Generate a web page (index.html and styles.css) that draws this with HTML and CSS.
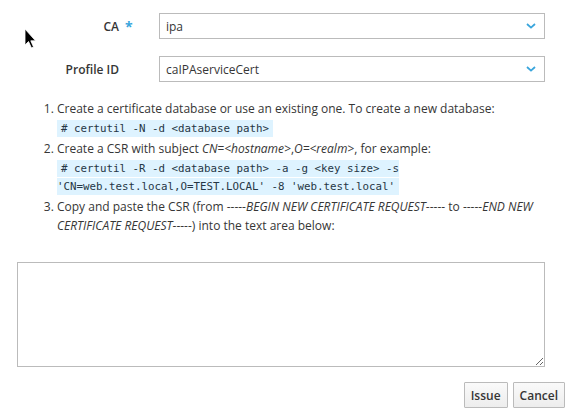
FILE: index.html
```html
<!DOCTYPE html>
<html>
<head>
<meta charset="utf-8">
<link rel="stylesheet" href="styles.css">
</head>
<body>
<div class="page">
  <div class="row">
    <div class="label required">CA</div>
    <div class="select"><span>ipa</span>
      <svg class="chev" width="10" height="6" viewBox="0 0 10 6"><path d="M1 1 L5 4.6 L9 1" fill="none" stroke="#39a5dc" stroke-width="1.8"/></svg>
    </div>
  </div>
  <div class="row">
    <div class="label">Profile ID</div>
    <div class="select"><span>caIPAserviceCert</span>
      <svg class="chev" width="10" height="6" viewBox="0 0 10 6"><path d="M1 1 L5 4.6 L9 1" fill="none" stroke="#39a5dc" stroke-width="1.8"/></svg>
    </div>
  </div>
  <ol class="steps">
    <li>Create a certificate database or use an existing one. To create a new database:
      <div class="cmd"><code># certutil -N -d &lt;database path&gt;</code></div>
    </li>
    <li>Create a CSR with subject <em>CN=&lt;hostname&gt;</em>,<em>O=&lt;realm&gt;</em>, for example:
      <div class="cmd"><code># certutil -R -d &lt;database path&gt; -a -g &lt;key size&gt; -s 'CN=web.test.local,O=TEST.LOCAL' -8 'web.test.local'</code></div>
    </li>
    <li>Copy and paste the CSR (from -----<em>BEGIN NEW CERTIFICATE REQUEST</em>----- to -----<em>END NEW CERTIFICATE REQUEST</em>-----) into the text area below:</li>
  </ol>
  <textarea class="csr"></textarea>
  <div class="buttons">
    <button class="btn">Issue</button>
    <button class="btn">Cancel</button>
  </div>
</div>
<svg class="cursor" width="16" height="24" viewBox="0 0 16 24"><path d="M1 1 L1 17 L4.5 13.5 L7.5 20 L9.5 19 L6.8 12.8 L11.5 12.8 Z" fill="#000" stroke="#fff" stroke-width="0.8"/></svg>
</body>
</html>
```
FILE: styles.css
```css
html, body {
  margin: 0;
  padding: 0;
  background: #fff;
}
body {
  font-family: "Open Sans", "Liberation Sans", sans-serif;
  font-size: 12px;
  color: #363636;
  position: relative;
  width: 572px;
  height: 417px;
  overflow: hidden;
}
.page {
  width: 545px;
  padding-top: 13px;
}
.row {
  display: flex;
  align-items: center;
  margin-bottom: 17px;
}
.label {
  width: 119px;
  text-align: right;
  font-weight: 600;
  position: relative;
  margin-right: 40px;
}
.required::after {
  content: "*";
  color: #39a5dc;
  position: absolute;
  left: 125px;
  top: -1px;
  font-size: 14px;
  font-weight: 700;
}
.select {
  flex: 1;
  height: 24px;
  border: 1px solid #bbb;
  display: flex;
  align-items: center;
  justify-content: space-between;
  padding: 0 8px 0 6px;
}
.chev {
  display: block;
}
.steps {
  margin: 1px 0 0;
  padding-left: 57px;
  line-height: 19px;
}
.steps li {
  padding: 0;
}
.steps em {
  font-style: italic;
}
.cmd {
  font-family: "DejaVu Sans Mono", monospace;
  font-size: 10.8px;
  line-height: 18px;
  margin: 2px 0 1px;
}
.cmd code {
  font-family: inherit;
  background: #def3ff;
  color: #263746;
  padding: 2px 4px;
}
.csr {
  display: block;
  box-sizing: border-box;
  margin: 27px 0 0 17px;
  width: 528px;
  height: 105px;
  border: 1px solid #bbb;
  border-radius: 0;
  outline: none;
  font-family: inherit;
}
.buttons {
  display: flex;
  justify-content: flex-end;
  gap: 5px;
  margin-top: 15px;
  width: 565px;
}
.btn {
  font-family: "Open Sans", "Liberation Sans", sans-serif;
  font-size: 12px;
  font-weight: 600;
  color: #363636;
  height: 26px;
  padding: 0 6px;
  border: 1px solid #bbb;
  border-radius: 1px;
  background: linear-gradient(#fafafa, #ededed);
}
.cursor {
  position: absolute;
  left: 24px;
  top: 28px;
}
```
